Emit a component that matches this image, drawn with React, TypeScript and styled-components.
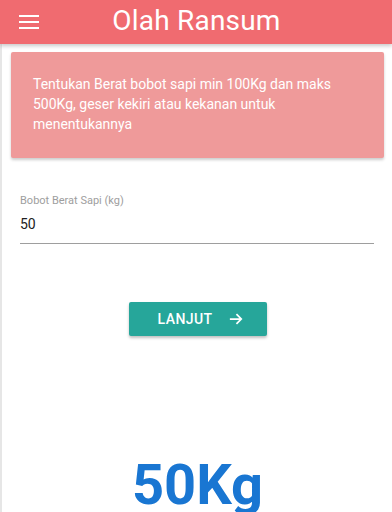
import React, { useState } from "react";
import styled, { createGlobalStyle } from "styled-components";

const GlobalStyle = createGlobalStyle`
  html, body {
    margin: 0;
    padding: 0;
    background: #ffffff;
    font-family: Roboto, "Liberation Sans", sans-serif;
  }
`;

const Page = styled.div`
  width: 392px;
  height: 512px;
  overflow: hidden;
  display: flex;
  flex-direction: column;
  background: #ffffff;
`;

const Header = styled.header`
  position: relative;
  z-index: 1;
  height: 44px;
  flex-shrink: 0;
  display: flex;
  align-items: center;
  background: #f06b70;
  box-shadow: 0 2px 4px rgba(0, 0, 0, 0.22);
`;

const MenuButton = styled.button`
  width: 58px;
  height: 44px;
  padding: 0 0 0 19px;
  border: none;
  background: transparent;
  display: flex;
  align-items: center;
  cursor: pointer;
`;

const Title = styled.h1`
  flex: 1;
  margin: 0 57px 0 0;
  padding-bottom: 4px;
  text-align: center;
  color: #ffffff;
  font-size: 28px;
  font-weight: 400;
  letter-spacing: 0.2px;
`;

const Body = styled.main`
  flex: 1;
  display: flex;
  flex-direction: column;
  border-left: 2px solid #e6e6e6;
  padding: 8px 8px 0 9px;
`;

const InfoCard = styled.div`
  background: #ef9a9a;
  border-radius: 2px;
  padding: 22px 40px 24px 22px;
  box-shadow: 0 2px 3px rgba(0, 0, 0, 0.2);
  color: #ffffff;
  font-size: 14px;
  line-height: 20px;
`;

const Field = styled.label`
  display: flex;
  flex-direction: column;
  margin: 36px 10px 0 9px;
`;

const FieldLabel = styled.span`
  color: #9e9e9e;
  font-size: 11px;
  line-height: 14px;
`;

const FieldInput = styled.input`
  margin-top: 8px;
  border: none;
  border-bottom: 1px solid #9e9e9e;
  padding: 0 0 11px 0;
  font-family: inherit;
  font-size: 14px;
  color: #212121;
  background: transparent;
  outline: none;
`;

const ButtonRow = styled.div`
  display: flex;
  justify-content: center;
  margin-top: 58px;
`;

const NextButton = styled.button`
  width: 138px;
  height: 34px;
  border: none;
  border-radius: 2px;
  background: #26a69a;
  color: #ffffff;
  font-family: inherit;
  font-size: 14px;
  font-weight: 500;
  letter-spacing: 0.4px;
  display: flex;
  align-items: center;
  justify-content: center;
  gap: 17px;
  box-shadow: 0 2px 3px rgba(0, 0, 0, 0.25);
  cursor: pointer;
  padding: 0 0 0 6px;
`;

const Weight = styled.div`
  margin-top: 117px;
  text-align: center;
  color: #1976d2;
  font-size: 56px;
  font-weight: 700;
  line-height: 64px;
`;

const MenuIcon = () => (
  <svg width="20" height="14" viewBox="0 0 20 14">
    <rect x="0" y="0" width="20" height="2" fill="#ffffff" />
    <rect x="0" y="6" width="20" height="2" fill="#ffffff" />
    <rect x="0" y="12" width="20" height="2" fill="#ffffff" />
  </svg>
);

const ArrowIcon = () => (
  <svg width="14" height="14" viewBox="0 0 16 16">
    <path
      d="M1 8h13M8.5 2.5L14 8l-5.5 5.5"
      fill="none"
      stroke="#ffffff"
      strokeWidth="2"
    />
  </svg>
);

const App: React.FC = () => {
  const [weight, setWeight] = useState("50");

  return (
    <Page>
      <GlobalStyle />
      <Header>
        <MenuButton type="button" aria-label="menu">
          <MenuIcon />
        </MenuButton>
        <Title>Olah Ransum</Title>
      </Header>
      <Body>
        <InfoCard>
          Tentukan Berat bobot sapi min 100Kg dan maks 500Kg, geser kekiri atau
          kekanan untuk menentukannya
        </InfoCard>
        <Field>
          <FieldLabel>Bobot Berat Sapi (kg)</FieldLabel>
          <FieldInput
            value={weight}
            onChange={(e) => setWeight(e.target.value)}
          />
        </Field>
        <ButtonRow>
          <NextButton type="button">
            LANJUT
            <ArrowIcon />
          </NextButton>
        </ButtonRow>
        <Weight>{weight}Kg</Weight>
      </Body>
    </Page>
  );
};

export default App;
